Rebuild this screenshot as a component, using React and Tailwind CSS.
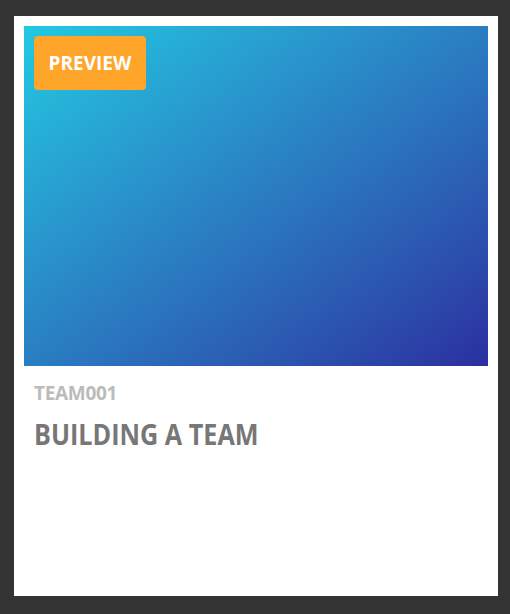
export default function App() {
  return (
    <div className="min-h-screen bg-[#333333] pl-[14px] pr-[12px] pt-[16px] pb-[18px]">
      <div className="bg-white p-[10px] h-[580px] flex flex-col">
        <div className="relative h-[340px] bg-gradient-to-br from-[#22c9e1] to-[#2b2e9f]">
          <div className="absolute left-[10px] top-[10px] w-[112px] h-[54px] rounded-[4px] bg-[#ffa52a] flex items-center justify-center">
            <span className="text-white font-bold text-[19px] font-['Open_Sans',sans-serif]">PREVIEW</span>
          </div>
        </div>
        <div className="px-[10px] pt-[15px] font-['Open_Sans',sans-serif] font-bold uppercase flex flex-col items-start">
          <div className="text-[#bbbbbb] text-[19px] leading-[24px] tracking-[-0.3px] whitespace-nowrap">TEAM001</div>
          <div className="text-[#777777] text-[28px] leading-[36px] mt-[11px] origin-left scale-x-[0.9] whitespace-nowrap">Building a team</div>
        </div>
      </div>
    </div>
  );
}
